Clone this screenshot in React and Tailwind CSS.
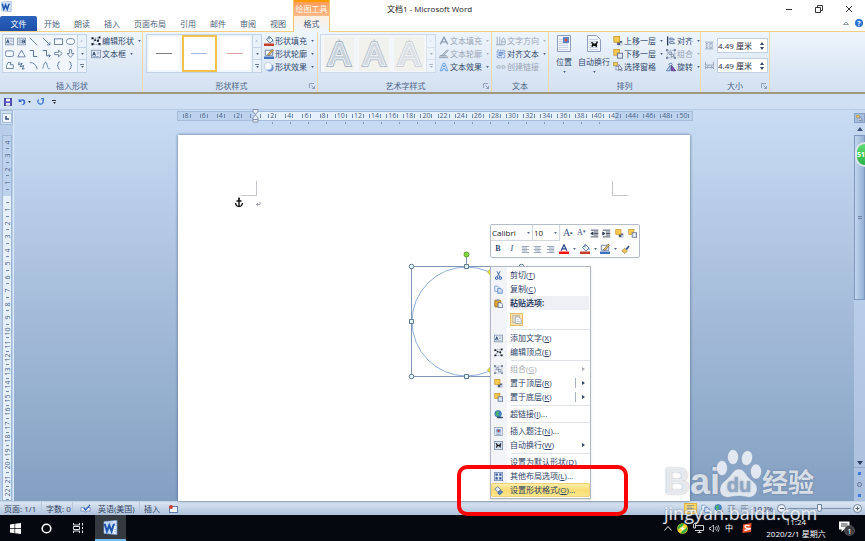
import React from 'react';
import clsx from 'clsx';

// every small icon is drawn on a 12 x 12 grid
const ICONS = {
  textbox: (
    <>
      <rect x="0.5" y="1.5" width="11" height="9" fill="#e8effa" stroke="#7d8fab" />
      <path d="M2 8 3.7 3.5 5.4 8M2.6 6.5h2.2" fill="none" stroke="#25406e" strokeWidth="1.1" />
      <path d="M7 4h3M7 6h3M2 9h8" stroke="#8193b0" strokeWidth="0.8" />
    </>
  ),
  vtextbox: (
    <>
      <rect x="0.5" y="1.5" width="11" height="9" fill="#e8effa" stroke="#7d8fab" />
      <path d="M3 3v6M5 3v6" stroke="#8193b0" />
      <path d="M7 4h3v4H7zM7 6h3" fill="none" stroke="#25406e" />
    </>
  ),
  line: <path d="M1 1 11 11" stroke="#4a6690" fill="none" />,
  arrow: <path d="M1 1 10 10M10.5 6.5v4h-4" stroke="#4a6690" fill="none" />,
  rect: <rect x="0.5" y="2.5" width="11" height="7.5" fill="#f7faff" stroke="#4a6690" />,
  oval: <ellipse cx="6" cy="6" rx="5.5" ry="4" fill="#f7faff" stroke="#4a6690" />,
  round: <rect x="0.5" y="2.5" width="11" height="7.5" rx="2.5" fill="#f7faff" stroke="#4a6690" />,
  triangle: <path d="M6 1.5 11 10.5H1z" fill="#f7faff" stroke="#4a6690" />,
  elbow: <path d="M1 2h5v8h5" fill="none" stroke="#4a6690" strokeWidth="1.2" />,
  elbowArrow: <path d="M1 2h5v7h5M9 7l2 2-2 2" fill="none" stroke="#4a6690" strokeWidth="1.2" />,
  rightArrow: <path d="M1 4.5h5V1.5L11 6l-5 4.5v-3H1z" fill="#f7faff" stroke="#4a6690" />,
  downArrow: <path d="M4.500 1v5H1.500L6 11l4.500-5h-3V1z" fill="#f7faff" stroke="#4a6690" />,
  freeform: <path d="M2 6 4 2h4L7 5h4v5H2z" fill="#f7faff" stroke="#4a6690" strokeLinejoin="round" />,
  scribble: <path d="M3 1 2 5l5-2-3 5 5-2-2 5 3-1" fill="none" stroke="#4a6690" strokeWidth="1.2" />,
  arc: <path d="M1 2q8 0 10 9" fill="none" stroke="#4a6690" />,
  curve: <path d="M1 10C4-2 6 1 7 6s2 5 4 4" fill="none" stroke="#4a6690" />,
  lbrace: <path d="M8 1Q5.500 1 5.500 3v1.500Q5.500 6 4 6q1.500 0 1.500 1.500V9q0 2 2.500 2" fill="none" stroke="#4a6690" />,
  rbrace: <path d="M4 1q2.500 0 2.500 2v1.500Q6.500 6 8 6 6.500 6 6.500 7.500V9q0 2-2.500 2" fill="none" stroke="#4a6690" />,
  editPoints: (
    <>
      <path d="M2 3 10 2 8 6l2 4H2l2-4z" fill="none" stroke="#6d7c94" strokeDasharray="1.500 1" />
      <path d="M0.500 1.500h2.500v2.500H0.500zM9 0.500h2.500V3H9zM7 4.500h2.500V7H7zM0.500 8.500h2.500V11H0.500zM9 8.500h2.500V11H9zM4 4h2v2H4z" fill="#1c222c" />
    </>
  ),
  fill: (
    <>
      <path d="M3 4 7 1l4 4-4 3.500z" fill="#eef3fb" stroke="#4c6797" />
      <path d="M10 4q2 2 1 4-1.500-1-1-4" fill="#3c70c4" />
      <path d="M6 0v4" stroke="#4c6797" />
      <rect x="0" y="9" width="12" height="3" fill="#c43c2c" />
    </>
  ),
  outline: (
    <>
      <path d="M1.500 1.500h9v6h-9z" fill="#f5f8fd" stroke="#5b7099" />
      <path d="M4 7 10 0l1.500 1.500L6 8z" fill="#e8b64c" stroke="#3a4a68" strokeWidth="0.600" />
      <rect x="0" y="9" width="12" height="3" fill="#3f72bd" />
    </>
  ),
  effect: (
    <>
      <circle cx="7" cy="7" r="4.500" fill="#6f94d6" />
      <circle cx="5" cy="5" r="4.500" fill="#f6f9ff" stroke="#9eb4d8" strokeWidth="0.600" />
    </>
  ),
  textFill: <path d="M1.500 10 6 1.500 10.500 10M3 7h6" fill="none" stroke="#8c9bb1" strokeWidth="1.600" />,
  textOutline: (
    <>
      <path d="M1 8h8M3 8 10 1l1 1-6 6" fill="none" stroke="#8f9bac" strokeWidth="1.200" />
      <rect x="0" y="9" width="11" height="2" fill="#a1abba" />
    </>
  ),
  textEffect: (
    <path d="M1.500 10.500 5 1.500h2l3.500 9H8L7.300 8H4.700L4 10.500zM5.300 6h1.400L6 4z" fill="#e8f4ff" stroke="#4f92d6" />
  ),
  direction: <path d="M1.500 1v10M4.500 1v10M0 10.500h11M7 10V5l2-3 2 3v5M7 7h4" fill="none" stroke="#96a3b5" />,
  alignText: (
    <>
      <rect x="1.500" y="1.500" width="9" height="9" fill="#dce9fb" stroke="#5a83bf" strokeDasharray="2 1" />
      <path d="M3 4h6M3 6h6M3 8h4" stroke="#3566ad" />
    </>
  ),
  link: <path d="M5 4.500H2.500a1.500 1.500 0 0 0 0 3H5M7 4.500h2.500a1.500 1.500 0 0 1 0 3H7M4 6h4" fill="none" stroke="#a0a9b6" />,
  front: (
    <>
      <rect x="5" y="6" width="6" height="5" fill="#4b5b7d" />
      <rect x="1" y="0.500" width="7" height="7" fill="#f6c84e" stroke="#c08a26" strokeWidth="0.800" />
      <rect x="8.500" y="8" width="3" height="3" fill="#cfd8ea" />
    </>
  ),
  back: (
    <>
      <rect x="1" y="0.500" width="7" height="7" fill="#f6c84e" stroke="#c08a26" strokeWidth="0.800" />
      <rect x="5.500" y="5" width="6" height="6" fill="#dfe6f2" stroke="#56678a" />
    </>
  ),
  pane: (
    <>
      <rect x="0.500" y="0.500" width="5" height="4" fill="#f4ca5c" stroke="#a98a4a" strokeWidth="0.800" />
      <rect x="3.500" y="5.500" width="5" height="4" fill="#e0e8f5" stroke="#6d80a2" strokeWidth="0.800" />
      <path d="M7 3v7l1.500-1.500L10 11l1-1-1.500-2H11z" fill="#fff" stroke="#2e4269" strokeWidth="0.700" />
    </>
  ),
  align: (
    <>
      <path d="M2 0.500v11" stroke="#1d3054" strokeWidth="1.500" />
      <path d="M4.500 2.500H8l2 2H4.500zM4.500 6.500h4l2 2.500h-6z" fill="#e2eaf7" stroke="#526ea0" />
    </>
  ),
  group: (
    <>
      <rect x="1.500" y="1.500" width="9" height="9" fill="none" stroke="#8c9ab0" strokeDasharray="2 1" />
      <path d="M3.500 3.500h3v3h-3zM6 6h3v3H6z" fill="#e3e9f2" stroke="#7c8aa2" />
      <path d="M0 0h2.500v2.500H0zM9.500 0H12v2.500H9.500zM0 9.500h2.500V12H0zM9.500 9.500H12V12H9.500z" fill="#7c8aa2" />
    </>
  ),
  rotate: (
    <>
      <path d="M0.500 10.500 5 4v6.500z" fill="#c5d8f3" stroke="#4d76b5" />
      <path d="M6.500 10.500V4l5 6.500z" fill="#7f4fb4" stroke="#523089" />
      <path d="M3 3q3-3 5 0" fill="none" stroke="#3d5c92" />
    </>
  ),
  height: <path d="M0 1.500h11M0 10.500h11M2.500 3v6M1 4.500 2.500 3 4 4.500M1 7.500 2.500 9 4 7.500M6.500 3v6h3V3z" fill="none" stroke="#6c7f9f" strokeWidth="0.800" />,
  width: <path d="M0.500 1v4.500h11V1M2 8.500h8M3.500 7 2 8.500 3.500 10M8.500 7 10 8.500 8.500 10M0.500 7v4M11.500 7v4" fill="none" stroke="#6c7f9f" strokeWidth="0.900" />,
  cut: (
    <>
      <path d="M4 0.500 8 8M8 0.500 4 8" stroke="#44679f" strokeWidth="1.300" />
      <circle cx="3.500" cy="9.500" r="1.700" fill="none" stroke="#1f4fa8" strokeWidth="1.300" />
      <circle cx="8.500" cy="9.500" r="1.700" fill="none" stroke="#1f4fa8" strokeWidth="1.300" />
    </>
  ),
  copy: (
    <>
      <path d="M1 1.500h4l2 2v5H1z" fill="#eaf2ff" stroke="#6e92cf" />
      <path d="M5 4.500h4l2 2v4.500H5z" fill="#cfe0fb" stroke="#4a76bf" />
    </>
  ),
  paste: (
    <>
      <rect x="1" y="1.500" width="8" height="9" rx="1" fill="#dca335" stroke="#94651c" />
      <rect x="3.500" y="0.500" width="3" height="2" fill="#8a93a5" />
      <path d="M5.500 5h4l2 2v4.500h-6z" fill="#eef3fb" stroke="#45608f" />
    </>
  ),
  pastePage: (
    <>
      <rect x="1" y="1.500" width="8" height="9" fill="#e9e1cf" stroke="#b3a788" strokeWidth="0.800" />
      <path d="M4 3.500h4l3 3v5H4z" fill="#fff" stroke="#8796ad" strokeWidth="0.900" />
      <path d="M5.500 7h3.500M5.500 9h4" stroke="#a9b4c6" strokeWidth="0.800" />
    </>
  ),
  hyperlink: (
    <>
      <circle cx="5.500" cy="5" r="4.500" fill="#3f86d2" stroke="#2a5c9b" strokeWidth="0.600" />
      <path d="M3 2q3-1 4 1L5 5l2 2-2 2Q1 6 3 2" fill="#4fb464" />
      <path d="M5 10h2.500M8.500 10H11" stroke="#38455c" strokeWidth="2" strokeLinecap="round" />
    </>
  ),
  caption: (
    <>
      <rect x="1" y="0.500" width="10" height="11" fill="#eef3fa" stroke="#8394b1" />
      <rect x="3" y="2.500" width="6" height="5" fill="#7c9bd0" />
      <circle cx="6" cy="5" r="1.500" fill="#b9463a" />
      <path d="M3 9.500h6" stroke="#52678f" />
    </>
  ),
  wrap: (
    <>
      <rect x="0.500" y="0.500" width="11" height="11" fill="#d8e3f4" stroke="#7588a9" />
      <path d="M2 3h2l1 2h2l2-2.500 1 1.500-1 1v4H8L7 7H5L4 9H2.500l1-3z" fill="#16191f" />
    </>
  ),
  layout: (
    <>
      <rect x="0.500" y="0.500" width="11" height="11" fill="#dce7f8" stroke="#6a82ad" />
      <path d="M2 2h3v3H2zM7 2h3v3H7zM2 7h3v3H2zM7 7h3v3H7z" fill="#31549c" />
    </>
  ),
  format: (
    <>
      <path d="M1 4 5 1l4 4-4 3z" fill="#e6eefb" stroke="#4b6699" />
      <path d="M5 9.500 9 6l2.500 2-4 3.500z" fill="#5f8bd1" stroke="#2e4f8c" />
    </>
  ),
  indentLess: <path d="M1 1.500h10M5 4h6M5 6h6M5 8h6M1 10.500h10M4 4 1 6l3 2z" fill="#233860" stroke="#3a4457" strokeWidth="1.200" />,
  indentMore: <path d="M1 1.500h10M5 4h6M5 6h6M5 8h6M1 10.500h10M1 4l3 2-3 2z" fill="#233860" stroke="#3a4457" strokeWidth="1.200" />,
  left: <path d="M1 2h10M1 4h7M1 6h10M1 8h7M1 10h10" stroke="#7f8da5" />,
  center: <path d="M1 2h10M2.500 4h7M1 6h10M2.500 8h7M1 10h10" stroke="#7f8da5" />,
  right: <path d="M1 2h10M4 4h7M1 6h10M4 8h7M1 10h10" stroke="#7f8da5" />,
  fontColor: (
    <>
      <path d="M2.500 8 6 1l3.500 7M4 5.700h4" fill="none" stroke="#274a8a" strokeWidth="1.500" />
      <rect x="0" y="9" width="12" height="3" fill="#f01414" />
    </>
  ),
  brush: (
    <>
      <path d="M6 5 10 0.500 11.500 2 8 7z" fill="#38589a" />
      <path d="M1 7.500 5 4.500 8.500 8 5 11.500z" fill="#ecc75a" stroke="#8f7433" strokeWidth="0.800" />
    </>
  ),
  save: (
    <>
      <rect x="0.500" y="0.500" width="11" height="11" fill="#5a55c0" stroke="#36338c" />
      <rect x="3" y="1" width="6" height="4" fill="#f4f6fd" />
      <rect x="3" y="7.500" width="6" height="4" fill="#dfe4f6" />
    </>
  ),
  undo: <path d="M1 1v5h5L4 4.200q4-1.700 4.500 2Q8.500 9 5 10.500q6 0 6-5Q10 0 3 2.800z" fill="#3467c8" />,
  redo: <path d="M3 2.500A4.500 4.500 0 1 0 9.500 3M7 1h4v4" fill="none" stroke="#3d78d0" strokeWidth="2.200" />,
};

function Icon({ name, className = 'size-[10px]' }) {
  return (
    <svg viewBox="0 0 12 12" className={clsx('shrink-0', className)} aria-hidden="true">
      {ICONS[name]}
    </svg>
  );
}

function Caret({ className = 'text-[#4a5f80]' }) {
  return (
    <svg viewBox="0 0 4 3" className={clsx('h-[2px] w-[3px] shrink-0', className)} aria-hidden="true">
      <path d="M0 0h4L2 3z" fill="currentColor" />
    </svg>
  );
}

function WordLogo({ className }) {
  return (
    <svg viewBox="0 0 14 14" className={className} aria-hidden="true">
      <path d="M1 1.500 13 0.500v13L1 12.500z" fill="#eef4fd" stroke="#7ca0d8" strokeWidth="0.800" />
      <path d="M1 2 9.500 1.500v11L1 12z" fill="#c4d8f5" />
      <path d="M10.500 3h2M10.500 5h2M10.500 9h2M10.500 11h2" stroke="#86a8dd" strokeWidth="0.800" />
      <path d="M1.500 3.500 3.700 10.500 5.800 5 8 10.500 10.300 3.500" fill="none" stroke="#1e56ae" strokeWidth="1.900" />
    </svg>
  );
}

const TABS = ['开始', '朗读', '插入', '页面布局', '引用', '邮件', '审阅', '视图'];

function Header() {
  return (
    <header className="flex h-[31px] shrink-0 bg-white">
      <div className="flex flex-col">
        <div className="h-4 pl-px pt-px">
          <WordLogo className="size-[11px]" />
        </div>
        <nav className="flex h-[15px]">
          <button type="button" className="w-[37px] rounded-t-xs bg-linear-to-b from-[#2b63bd] to-[#1e4fa8] text-white">文件</button>
          {TABS.map((tab) => (
            <button key={tab} type="button" className="px-[7px] text-[#4d5f7b]">{tab}</button>
          ))}
        </nav>
      </div>
      <div className="relative z-10 -mb-px flex w-[37px] flex-col border-x border-[#f3c56d]">
        <span className="flex h-4 items-center justify-center border-t-2 border-[#ff9900] bg-linear-to-b from-[#fd9d58] to-[#fdb988] text-[#fff6ee]">
          绘图工具
        </span>
        <button type="button" className="flex-1 bg-linear-to-b from-[#fdeee0] to-[#eef5fc] text-[#3d5172]">格式</button>
      </div>
      <div className="flex flex-1 flex-col">
        <div className="flex h-[17px] items-center pl-[57px]">
          <h1 className="text-[#222]">文档1 - Microsoft Word</h1>
          <div className="ml-auto flex items-center gap-[22px] pr-3 text-[#333]">
            <button type="button" aria-label="最小化">
              <svg viewBox="0 0 8 8" className="size-2"><path d="M1 4.500h6" stroke="currentColor" /></svg>
            </button>
            <button type="button" aria-label="还原">
              <svg viewBox="0 0 8 8" className="size-2"><path d="M0.500 2.500h5v5h-5zM2.500 2V0.500h5v5H6" fill="none" stroke="currentColor" /></svg>
            </button>
            <button type="button" aria-label="关闭">
              <svg viewBox="0 0 8 8" className="size-2"><path d="m1 1 6 6M7 1 1 7" stroke="currentColor" /></svg>
            </button>
          </div>
        </div>
        <div className="ml-auto flex items-center gap-[6px] pr-[2px] pt-[2px]">
          <button type="button" aria-label="收起功能区">
            <svg viewBox="0 0 6 4" className="h-1 w-[6px]"><path d="M0.500 3.500h5L3 1z" fill="none" stroke="#6f7d92" strokeWidth="0.800" /></svg>
          </button>
          <button type="button" className="flex size-[8px] items-center justify-center rounded-full bg-[#2e74d2] text-[7px] font-bold leading-none text-white">?</button>
        </div>
      </div>
    </header>
  );
}

function Tool({ icon, label, caret, disabled }) {
  return (
    <button
      type="button"
      disabled={disabled}
      className={clsx('flex h-[13px] items-center gap-px whitespace-nowrap', disabled ? 'text-[#9aa4b3]' : 'text-[#33496c]')}
    >
      <Icon name={icon} />
      <span>{label}</span>
      {caret && <span className="flex pl-[3px]"><Caret className={disabled ? 'text-[#a9b2bf]' : undefined} /></span>}
    </button>
  );
}

function Group({ title, launcher, className, children }) {
  return (
    <section className={clsx('flex shrink-0 flex-col justify-between border-r border-[#f1d9ab] pt-[2px]', className)}>
      <div className="flex h-[39px]">{children}</div>
      <div className="flex h-[13px] items-center text-[#4d6285]">
        <span className="flex-1 text-center">{title}</span>
        {launcher && (
          <button type="button" aria-label={title} className="-ml-2 pr-[2px]">
            <svg viewBox="0 0 6 6" className="size-[6px]"><path d="M0.500 5V0.500H5M2.500 2.500l3 3M5.500 3v2.500H3" fill="none" stroke="#8091ad" strokeWidth="0.800" /></svg>
          </button>
        )}
      </div>
    </section>
  );
}

function GalleryScroll({ faded }) {
  return (
    <div className={clsx('flex w-[9px] flex-col border-l border-[#c3d3e7] bg-[#e9f1fb]', faded && 'opacity-50')}>
      <button type="button" aria-label="上一行" className="flex flex-1 rotate-180 items-center justify-center"><Caret className="text-[#b5c1d2]" /></button>
      <button type="button" aria-label="下一行" className="flex flex-1 items-center justify-center border-y border-[#c3d3e7]"><Caret /></button>
      <button type="button" aria-label="更多" className="flex flex-1 flex-col items-center justify-center gap-px">
        <span className="h-px w-1 bg-[#6d809e]" />
        <Caret />
      </button>
    </div>
  );
}

const SHAPES = [
  'textbox', 'vtextbox', 'line', 'arrow', 'rect', 'oval',
  'round', 'triangle', 'elbow', 'elbowArrow', 'rightArrow', 'downArrow',
  'freeform', 'scribble', 'arc', 'curve', 'lbrace', 'rbrace',
];

const SHAPE_STYLES = [
  { name: '黑色', line: 'bg-[#7b7f80]' },
  { name: '蓝色', line: 'bg-[#a3bbdd]', active: true },
  { name: '红色', line: 'bg-[#dea5a3]' },
];

const ART_STYLES = ['#a5b3c5', '#b4bfcd', '#cdd2d8'];

function BigTool({ label, dog }) {
  return (
    <button type="button" className="flex w-[30px] flex-col items-center whitespace-nowrap pt-px text-[#33496c]">
      <svg viewBox="0 0 14 17" className="h-[17px] w-[14px]" aria-hidden="true">
        <path d={dog ? 'M0.500 0.500h9l4 4v12h-13z' : 'M0.500 0.500h13v16h-13z'} fill="#f2f6fc" stroke="#8d9fbd" />
        <path d="M2 4.500h9M2 6.500h9M2 8.500h9M2 10.500h9M2 12.500h9M2 14.500h9" stroke="#b8c6dc" strokeWidth="0.700" />
        {dog ? (
          <path d="M4 7h1.500l1 1.500h2L10 6l1 1.500-1 1v3.500H9L8 11H6.500L5.500 12H4.500l.5-3z" fill="#15181c" />
        ) : (
          <>
            <rect x="6" y="2" width="6" height="6" fill="#5f84c8" />
            <circle cx="9" cy="5" r="1.500" fill="#c9564b" />
          </>
        )}
      </svg>
      <span className="pt-1">{label}</span>
      <span className="flex pt-[3px]"><Caret /></span>
    </button>
  );
}

function SizeField({ id, icon, label }) {
  return (
    <div className="flex items-center gap-[3px]">
      <label htmlFor={id} aria-label={label}><Icon name={icon} className="size-[9px]" /></label>
      <div className="flex h-[15px] w-[51px] items-center border border-[#c0cfe2] bg-white pr-[3px]">
        <input id={id} defaultValue="4.49 厘米" className="min-w-0 flex-1 bg-transparent text-[#1f2a3d] outline-none" />
        <svg viewBox="0 0 4 8" className="h-2 w-1" aria-hidden="true"><path d="M0 3h4L2 0zM0 5h4L2 8z" fill="#33496c" /></svg>
      </div>
    </div>
  );
}

function Ribbon() {
  return (
    <div className="flex h-[63px] shrink-0 overflow-hidden border-b-2 border-t border-b-[#a3967f] border-t-[#f5cf83] bg-linear-to-b from-[#eef5fc] to-[#d2e0f1]">
      <Group title="插入形状" className="w-[143px] pl-[2px]">
        <div className="flex w-[85px] border border-[#c3d3e7] bg-[#f1f6fd]">
          <div className="grid flex-1 grid-cols-6 place-items-center">
            {SHAPES.map((shape) => (
              <button key={shape} type="button" aria-label={shape}><Icon name={shape} className="size-[9px]" /></button>
            ))}
          </div>
          <GalleryScroll />
        </div>
        <div className="flex flex-col pl-1">
          <Tool icon="editPoints" label="编辑形状" caret />
          <Tool icon="textbox" label="文本框" caret />
        </div>
      </Group>

      <Group title="形状样式" launcher className="w-[175px] pl-[3px]">
        <div className="flex w-[116px] border border-[#c3d3e7] bg-[#f1f6fd]">
          <div className="flex flex-1 items-stretch gap-px">
            {SHAPE_STYLES.map(({ name, line, active }) => (
              <button
                key={name}
                type="button"
                aria-label={name}
                className={clsx('flex flex-1 items-center justify-center border-2 bg-white', active ? 'border-[#f2c24b]' : 'border-[#f1f6fd]')}
              >
                <span className={clsx('h-px w-4', line)} />
              </button>
            ))}
          </div>
          <GalleryScroll />
        </div>
        <div className="flex flex-col pl-[2px]">
          <Tool icon="fill" label="形状填充" caret />
          <Tool icon="outline" label="形状轮廓" caret />
          <Tool icon="effect" label="形状效果" caret />
        </div>
      </Group>

      <Group title="艺术字样式" launcher className="w-[174px] pl-[2px]">
        <div className="flex w-[116px] border border-[#ccd9ea] bg-[#f3f7fc]">
          <div className="flex flex-1 items-center justify-around">
            {ART_STYLES.map((color) => (
              <button key={color} type="button" disabled aria-label="艺术字" className="bg-[#f1f2ee]">
                <svg viewBox="0 0 30 34" className="h-[34px] w-[30px] font-['Liberation_Sans'] text-[31px]">
                  <text x="15" y="28" textAnchor="middle" fill="#f6f7f5" stroke={color} strokeWidth="4">A</text>
                  <text x="15" y="28" textAnchor="middle" fill="#f1f2ee" stroke="#eef1f4" strokeWidth="2">A</text>
                  <text x="15" y="28" textAnchor="middle" fill={color} fillOpacity="0.500">A</text>
                </svg>
              </button>
            ))}
          </div>
          <GalleryScroll faded />
        </div>
        <div className="flex flex-col pl-[3px]">
          <Tool icon="textFill" label="文本填充" caret disabled />
          <Tool icon="textOutline" label="文本轮廓" caret disabled />
          <Tool icon="textEffect" label="文本效果" caret />
        </div>
      </Group>

      <Group title="文本" className="w-[57px]">
        <div className="flex flex-col pl-1">
          <Tool icon="direction" label="文字方向" caret disabled />
          <Tool icon="alignText" label="对齐文本" caret />
          <Tool icon="link" label="创建链接" disabled />
        </div>
      </Group>

      <Group title="排列" className="w-[152px]">
        <BigTool label="位置" />
        <BigTool label="自动换行" dog />
        <div className="flex flex-col pl-1">
          <Tool icon="front" label="上移一层" caret />
          <Tool icon="back" label="下移一层" caret />
          <Tool icon="pane" label="选择窗格" />
        </div>
        <div className="flex flex-col pl-[3px]">
          <Tool icon="align" label="对齐" caret />
          <Tool icon="group" label="组合" caret disabled />
          <Tool icon="rotate" label="旋转" caret />
        </div>
      </Group>

      <Group title="大小" launcher className="w-[69px]">
        <div className="flex flex-col justify-between pl-1 pt-1">
          <SizeField id="shape-height" icon="height" label="高度" />
          <SizeField id="shape-width" icon="width" label="宽度" />
        </div>
      </Group>
    </div>
  );
}

function QuickAccess() {
  return (
    <div className="flex h-[15px] shrink-0 items-center bg-[#cfe0f5] pl-1">
      <button type="button" aria-label="保存"><Icon name="save" className="size-2" /></button>
      <button type="button" aria-label="撤消" className="ml-[6px]"><Icon name="undo" className="size-2" /></button>
      <span className="ml-[2px]"><Caret className="text-[#222]" /></span>
      <button type="button" aria-label="重复" className="ml-[6px]"><Icon name="redo" className="size-[7px]" /></button>
      <button type="button" aria-label="自定义快速访问工具栏" className="ml-[8px] flex flex-col items-center gap-px">
        <span className="h-px w-1 bg-[#333]" />
        <Caret className="text-[#222]" />
      </button>
    </div>
  );
}

const H_MARKS = Array.from({ length: 30 }, (_, i) => i * 2 - 8);
const V_MARKS = Array.from({ length: 27 }, (_, i) => i - 4);

// the margins of the page are darker; 0 and 42 lie on the border between both
function markColor(n) {
  if (n === 0) return 'bg-linear-to-r from-[#bdd2ec] from-50% to-[#e6f0fb] to-50%';
  if (n === 42) return 'bg-linear-to-r from-[#e6f0fb] from-50% to-[#bdd2ec] to-50%';
  return n < 0 || n > 42 ? 'bg-[#bdd2ec]' : 'bg-[#e6f0fb]';
}

function HorizontalRuler() {
  return (
    <div className="w-[514px] shrink-0 text-[#4a6489]">
      <div className="grid h-[8px] grid-cols-[repeat(30,minmax(0,1fr))] grid-rows-[8px] outline outline-[#a5bcd9]">
        {H_MARKS.map((n) => (
          <span key={n} className={clsx('flex items-center justify-center gap-px text-[7px] leading-[8px]', markColor(n))}>
            <i className="h-1 w-px bg-[#6f8bb0]" />
            {n === 0 ? (
              <svg viewBox="0 0 7 14" className="z-10 -my-1 h-[14px] w-[7px] shrink-0" aria-label="缩进">
                <path d="M1 0.500h5v2L3.500 5.500 1 2.500zM3.500 6 6 8.500v4.500H1V8.500zM1 10.500h5" fill="#e8eef7" stroke="#7b8ca8" strokeWidth="0.900" />
              </svg>
            ) : (
              <span>{Math.abs(n)}</span>
            )}
            <i className="h-1 w-px bg-[#6f8bb0]" />
          </span>
        ))}
      </div>
      <div className="flex justify-between pl-[94px] pr-[92px] pt-[2px]">
        {Array.from({ length: 19 }, (_, i) => <i key={i} className="h-[2px] w-px bg-[#7d94b5]" />)}
      </div>
    </div>
  );
}

function VerticalRuler() {
  return (
    <div className="flex w-[14px] shrink-0 flex-col border-r border-[#dbe9f9] bg-[#b9cee8] pl-[2px] pr-px">
      <div className="-ml-[2px] -mr-px flex h-[15px] items-center justify-center border border-[#a5bcd9] bg-[#cfe0f5]">
        <button type="button" aria-label="制表符" className="flex size-[10px] items-center justify-center border border-[#a5bcd9] bg-[#eef5fd]">
          <svg viewBox="0 0 4 4" className="size-1"><path d="M1 0v3h3" fill="none" stroke="#2f4a78" strokeWidth="1.500" /></svg>
        </button>
      </div>
      <div className="mt-[10px] flex min-h-0 flex-1 flex-col overflow-hidden border border-[#9fb6d4] text-[7px] leading-none text-[#4a6489]">
        {V_MARKS.map((n) => (
          <span
            key={n}
            className={clsx(
              'flex min-h-0 flex-1 flex-col items-center justify-between',
              n < 0 && 'bg-[#bdd2ec]',
              n === 0 && 'bg-linear-to-b from-[#bdd2ec] from-50% to-[#e6f0fb] to-50%',
              n > 0 && 'bg-[#e6f0fb]',
            )}
          >
            <span className="flex min-h-0 flex-1 items-center">
              {n !== 0 && <span className="-rotate-90">{Math.abs(n)}</span>}
            </span>
            <i className="h-px w-[3px] shrink-0 bg-[#6f8bb0]" />
          </span>
        ))}
      </div>
    </div>
  );
}

function MiniToolbar() {
  return (
    <div className="absolute left-[312px] top-[89px] flex w-[150px] flex-col rounded-xs border border-[#b6bdc9] bg-white shadow-xs">
      <div className="flex h-4 items-center gap-[3px]">
        <div className="flex h-full">
          <div className="flex w-[42px] items-center border-b border-r border-[#d3d8e0] pr-[2px]">
            <select aria-label="字体" className="min-w-0 flex-1 appearance-none pl-px text-[#222] outline-none"><option>Calibri</option></select>
            <Caret />
          </div>
          <div className="flex w-[27px] items-center border-b border-r border-[#d3d8e0] pr-[2px]">
            <select aria-label="字号" className="min-w-0 flex-1 appearance-none pl-px text-[#222] outline-none"><option>10</option></select>
            <Caret />
          </div>
        </div>
        <div className="flex flex-1 items-center justify-between pr-[2px]">
          <button type="button" className="font-['Liberation_Serif'] text-[10px] leading-none text-[#3a5684]">A<sup className="text-[5px]">▴</sup></button>
          <button type="button" className="font-['Liberation_Serif'] leading-none text-[#3a5684]">A<sup className="text-[5px]">▾</sup></button>
          {['indentLess', 'indentMore', 'front', 'back'].map((name) => (
            <button key={name} type="button" aria-label={name}><Icon name={name} className="size-[9px]" /></button>
          ))}
        </div>
      </div>
      <div className="flex h-4 items-center justify-between pl-[2px] pr-[9px]">
        <button type="button" className="w-[10px] font-['Liberation_Serif'] font-bold text-[#2f4a7c]">B</button>
        <button type="button" className="w-[10px] font-['Liberation_Serif'] italic text-[#2f4a7c]">I</button>
        {['left', 'center', 'right'].map((name) => (
          <button key={name} type="button" aria-label={name}><Icon name={name} className="size-[9px]" /></button>
        ))}
        {['fontColor', 'fill', 'outline'].map((name) => (
          <button key={name} type="button" aria-label={name} className="flex items-center gap-1"><Icon name={name} /><Caret /></button>
        ))}
        <button type="button" aria-label="格式刷"><Icon name="brush" className="size-[9px]" /></button>
      </div>
    </div>
  );
}

const MENU = [
  { icon: 'cut', label: '剪切', hotkey: 'T' },
  { icon: 'copy', label: '复制', hotkey: 'C' },
  { icon: 'paste', label: '粘贴选项:', header: true },
  { pasteOptions: true },
  { separator: true },
  { icon: 'textbox', label: '添加文字', hotkey: 'X' },
  { icon: 'editPoints', label: '编辑顶点', hotkey: 'E' },
  { separator: true },
  { icon: 'group', label: '组合', hotkey: 'G', disabled: true, sub: true },
  { icon: 'front', label: '置于顶层', hotkey: 'R', sub: true, split: true },
  { icon: 'back', label: '置于底层', hotkey: 'K', sub: true, split: true },
  { separator: true },
  { icon: 'hyperlink', label: '超链接', hotkey: 'I', dots: true },
  { separator: true },
  { icon: 'caption', label: '插入题注', hotkey: 'N', dots: true },
  { icon: 'wrap', label: '自动换行', hotkey: 'W', sub: true },
  { separator: true },
  { label: '设置为默认形状', hotkey: 'D' },
  { icon: 'layout', label: '其他布局选项', hotkey: 'L', dots: true },
  { icon: 'format', label: '设置形状格式', hotkey: 'O', dots: true, active: true },
];

function MenuRow({ item }) {
  if (item.separator) {
    return <div className="ml-5 flex h-[3px] items-center"><span className="h-px flex-1 bg-[#dfe2e8]" /></div>;
  }
  if (item.pasteOptions) {
    return (
      <div className="flex h-[18px] items-center pl-[19px]">
        <button type="button" aria-label="保留源格式" className="flex size-[13px] items-center justify-center border border-[#e8bd6a] bg-[#fbe3ad]">
          <Icon name="pastePage" />
        </button>
      </div>
    );
  }
  return (
    <button
      type="button"
      disabled={item.disabled}
      className={clsx(
        'flex h-[14px] items-center whitespace-nowrap pl-[3px] pr-[5px] text-left',
        item.disabled ? 'text-[#a6abb3]' : 'text-[#2d4266]',
        item.active && 'rounded-xs bg-linear-to-b from-[#fdf0b0] via-[#f9dc72] to-[#fbe890] outline outline-[#edd27a] -outline-offset-1',
      )}
    >
      <span className="w-4">{item.icon && <Icon name={item.icon} className="size-[9px]" />}</span>
      <span className={clsx('flex h-full flex-1 items-center', item.header && '-mr-1 bg-[#eef0f5] font-bold')}>
        {item.label}
        {item.hotkey && <>(<u>{item.hotkey}</u>)</>}
        {item.dots && '...'}
      </span>
      {item.split && <span className="mr-[6px] h-[10px] w-px bg-[#aab2c0]" />}
      {item.sub && (
        <svg viewBox="0 0 3 4" className="h-1 w-[3px]" aria-hidden="true"><path d="M0 0v4l3-2z" fill="currentColor" /></svg>
      )}
    </button>
  );
}

function ContextMenu() {
  return (
    <div className="absolute left-[312px] top-[131px] flex w-[101px] flex-col border border-[#b1b8c4] bg-white bg-linear-to-r from-[#f2f4f8] from-[16px] to-white to-[16px] py-px shadow-sm">
      {MENU.map((item, i) => <MenuRow key={i} item={item} />)}
    </div>
  );
}

function Page() {
  return (
    <article className="relative min-h-0 w-[512px] flex-1 bg-white shadow-[0_0_3px_#4f6a90]">
      <svg viewBox="0 0 512 260" className="absolute left-0 top-0 h-[260px] w-[512px]" aria-hidden="true">
        <path d="M63 60.500h15.500V46M450 60.500h-15.500V46" fill="none" stroke="#c3c6cb" />
        <path d="M61 64v7M58.500 66h5M57.500 68q.5 3.500 3.500 3.500t3.500-3.500" fill="none" stroke="#111" strokeWidth="1.400" />
        <circle cx="61" cy="63.500" r="1" fill="#111" />
        <path d="M82 67v2.500h-3.500M80 68l-1.500 1.500L80 71" fill="none" stroke="#8a8f97" strokeWidth="0.800" />
        <rect x="233.500" y="131.500" width="110" height="110" fill="none" stroke="#8197b3" />
        <circle cx="288.500" cy="186.500" r="54.500" fill="none" stroke="#8fb0de" />
        <path d="M288.500 131V121" stroke="#8197b3" />
        <circle cx="288.500" cy="119.500" r="2.500" fill="#86dc3c" stroke="#5b9b3a" />
        <g fill="#e4f7fb" stroke="#5f7a94">
          <circle cx="233.500" cy="131.500" r="2.300" />
          <circle cx="343.500" cy="131.500" r="2.300" />
          <circle cx="233.500" cy="241.500" r="2.300" />
          <path d="M286.500 129.500h4v4h-4zM286.500 239.500h4v4h-4zM231.500 184.500h4v4h-4z" />
        </g>
        <path d="m312 134.500 2.500 2.500-2.500 2.500-2.500-2.500zM312 232.500l2.500 2.500-2.500 2.500-2.500-2.500z" fill="#f7ec3c" stroke="#b09e36" strokeWidth="0.800" />
      </svg>
      <MiniToolbar />
      <ContextMenu />
      <div className="absolute left-[279px] top-[330px] z-20 h-[51px] w-[171px] rounded-[10px] border-4 border-[#fb0207]" />
    </article>
  );
}

function Scrollbar() {
  return (
    <div className="relative flex w-[11px] shrink-0 flex-col items-center bg-linear-to-b from-[#c6d9f1] to-[#a9c0de] pt-[3px]">
      <button type="button" aria-label="标尺" className="flex h-[10px] w-full items-center justify-center border border-[#87a0c3] bg-[#a5bedd]">
        <Icon name="pane" className="size-[7px]" />
      </button>
      <button type="button" aria-label="向上" className="flex h-3 items-center">
        <svg viewBox="0 0 6 4" className="h-1 w-[6px]"><path d="M0 4h6L3 0z" fill="#3b5075" /></svg>
      </button>
      <div className="flex h-[165px] w-full flex-col items-center justify-center gap-px border border-[#7f99be] bg-linear-to-r from-[#c3d7ef] to-[#94b0d4]">
        <i className="h-px w-1 bg-[#6e83a5]" />
        <i className="h-px w-1 bg-[#6e83a5]" />
      </div>
      <button type="button" aria-label="向下" className="mt-auto flex h-2 items-center">
        <svg viewBox="0 0 6 4" className="h-1 w-[6px]"><path d="M0 0h6L3 4z" fill="#2c3f63" /></svg>
      </button>
      <div className="flex h-[34px] w-full flex-col items-center justify-around border-t border-[#93aacb]">
        <button type="button" aria-label="前一页" className="size-[3px] bg-[#3d78dd]" />
        <button type="button" aria-label="选择浏览对象" className="size-[5px] rounded-full border border-[#60728f]" />
        <button type="button" aria-label="下一页" className="size-[3px] bg-[#3d78dd]" />
      </div>
      <div className="absolute right-0 top-[32px] flex h-[25px] w-[10px] items-center overflow-hidden rounded-l-full border-2 border-r-0 border-[#dfe5ea] bg-linear-to-b from-[#5fdc72] to-[#27b24a] text-[7px] font-bold text-white">
        51
      </div>
    </div>
  );
}

function StatusBar() {
  const cell = 'flex h-full items-center border-r border-[#b6c7dc]';
  return (
    <footer className="flex h-[14px] shrink-0 items-center border-t border-[#c3d3e6] bg-linear-to-b from-[#dbe6f3] to-[#aec2da] text-[#33435e]">
      <span className={clsx(cell, 'w-[42px] pl-1')}>页面: 1/1</span>
      <span className={clsx(cell, 'w-[31px] pl-1')}>字数: 0</span>
      <span className="flex w-[25px] justify-center">
        <svg viewBox="0 0 12 10" className="h-[9px] w-[11px]" aria-hidden="true">
          <path d="M1 4q3-1 5 1 2-2 5-1v4q-3-1-5 1-2-2-5-1z" fill="#fff" stroke="#5c77a8" strokeWidth="0.800" />
          <path d="m4 4 2 3 5-6" fill="none" stroke="#2b62c2" strokeWidth="1.400" />
        </svg>
      </span>
      <span className={clsx(cell, 'w-[42px]')}>英语(美国)</span>
      <span className="w-[29px] pl-1">插入</span>
      <svg viewBox="0 0 9 8" className="h-2 w-[9px]" aria-hidden="true">
        <rect x="0.500" y="1.500" width="8" height="6" fill="#f1f5fb" stroke="#5f7cae" />
        <circle cx="2" cy="2" r="2" fill="#cf4034" />
      </svg>
      <div className="ml-auto flex items-center gap-[2px]">
        <div className="flex gap-1">
          <button type="button" aria-label="页面视图" className="border border-[#e2b23f] bg-[#fbd868] px-px"><Icon name="left" className="size-[9px]" /></button>
          <button type="button" aria-label="阅读版式"><Icon name="copy" className="size-[9px]" /></button>
          <button type="button" aria-label="Web 版式"><Icon name="hyperlink" className="size-[9px]" /></button>
          <button type="button" aria-label="大纲"><Icon name="center" className="size-[9px]" /></button>
          <button type="button" aria-label="草稿"><Icon name="left" className="size-[9px]" /></button>
        </div>
        <span className="w-[24px] text-center">100%</span>
        <button type="button" aria-label="缩小" className="flex size-[9px] items-center justify-center rounded-full border border-[#71829d] bg-[#eef3f9]"><i className="h-px w-1 bg-[#4e5f7c]" /></button>
        <input
          type="range"
          aria-label="显示比例"
          className="h-[10px] w-[63px] appearance-none bg-transparent [&::-webkit-slider-runnable-track]:h-px [&::-webkit-slider-runnable-track]:bg-[#8294b0] [&::-webkit-slider-thumb]:-mt-1 [&::-webkit-slider-thumb]:h-2 [&::-webkit-slider-thumb]:w-[5px] [&::-webkit-slider-thumb]:appearance-none [&::-webkit-slider-thumb]:rounded-b-full [&::-webkit-slider-thumb]:border [&::-webkit-slider-thumb]:border-[#6b7f9f] [&::-webkit-slider-thumb]:bg-[#edf2f8]"
        />
        <button type="button" aria-label="放大" className="mr-[3px]">
          <svg viewBox="0 0 9 9" className="size-[9px]"><circle cx="4.500" cy="4.500" r="4" fill="#eef3f9" stroke="#71829d" /><path d="M2.500 4.500h4M4.500 2.500v4" stroke="#4e5f7c" /></svg>
        </button>
      </div>
    </footer>
  );
}

function Taskbar() {
  return (
    <div className="flex h-[26px] shrink-0 items-center bg-[#05080f] text-white">
      <button type="button" aria-label="开始" className="flex w-[31px] justify-center">
        <svg viewBox="0 0 11 11" className="size-[11px]"><path d="m0 1.500 4.500-.7v4.400H0zM5.200.7 11 0v5.200H5.200zM0 5.900h4.500v4.400L0 9.600zM5.200 5.900H11V11l-5.800-.8z" fill="#fff" /></svg>
      </button>
      <button type="button" aria-label="Cortana" className="flex w-[31px] justify-center">
        <svg viewBox="0 0 11 11" className="size-[11px]"><circle cx="5.500" cy="5.500" r="4.300" fill="none" stroke="#fff" strokeWidth="1.600" /></svg>
      </button>
      <button type="button" aria-label="任务视图" className="flex w-[33px] justify-center">
        <svg viewBox="0 0 12 10" className="h-[10px] w-3"><path d="M0.500 0v2h6V0M0.500 10V8h6v2M0.500 3.500h6v3h-6zM9.500 0v2.500M9.500 4v2M9.500 7.500V10" fill="none" stroke="#dfe3e8" /></svg>
      </button>
      <button type="button" aria-label="Word" className="flex h-full w-[31px] items-center justify-center border-b-2 border-[#76b9ed] bg-[#353a41]">
        <WordLogo className="size-[15px]" />
      </button>
      <div className="ml-auto flex items-center">
        <div className="flex items-center gap-[5px]">
          <svg viewBox="0 0 8 5" className="h-[5px] w-2" aria-hidden="true"><path d="m0.500 4.500 3.500-4 3.500 4" fill="none" stroke="#e6e6e6" /></svg>
          <svg viewBox="0 0 11 11" className="size-[11px]" aria-hidden="true">
            <circle cx="5.500" cy="5.500" r="5.300" fill="#f6d52a" />
            <path d="M1 7a5 5 0 0 1 6-6.300L5.500 3.500q-3 .5-4.500 3.500zM10 4a5 5 0 0 1-6 6.300l1.500-2.800q3-.5 4.500-3.500z" fill="#35ad3c" />
            <path d="M5.500 3.500v4M3.500 5.500h4" stroke="#fff" strokeWidth="1.500" />
          </svg>
          <svg viewBox="0 0 11 9" className="h-[9px] w-[11px]" aria-hidden="true"><path d="M3 1.500h7.500v5H2M0.500 0v4h2V0M4.500 8.500h4M6.500 6.500v2" fill="none" stroke="#e6e6e6" strokeWidth="0.900" /></svg>
          <svg viewBox="0 0 11 9" className="h-[9px] w-[11px]" aria-hidden="true"><path d="M0.500 3.500H2L4.500 1v7L2 5.500H0.500zM6 3q1 1.500 0 3M7.500 2q2 2.500 0 5M9 1q2.500 3.500 0 7" fill="none" stroke="#cfd2d6" strokeWidth="0.800" /></svg>
          <span>中</span>
        </div>
        <svg viewBox="0 0 10 10" className="ml-[9px] size-[10px]" aria-hidden="true">
          <path d="M1 1.500 9.500 0 9 9 0.500 10z" fill="#f0512c" />
          <path d="M7.500 2.700Q3 1.700 3 3.600T7 5.500 2.500 7.500" fill="none" stroke="#fff" strokeWidth="1.300" />
        </svg>
        <div className="ml-[13px] flex w-[62px] flex-col items-center whitespace-nowrap leading-[12px]">
          <span>11:24</span>
          <span>2020/2/1 星期六</span>
        </div>
        <button type="button" aria-label="通知" className="ml-[11px] mr-[10px]">
          <svg viewBox="0 0 17 16" className="h-4 w-[17px]">
            <path d="M1 1.500h10.500v8H6L3.500 12V9.500H1z" fill="#fff" />
            <path d="M3 4h6.500M3 6h6.500" stroke="#05080f" strokeWidth="0.800" />
            <circle cx="11.500" cy="10.500" r="5" fill="#3b3e42" stroke="#6e7175" strokeWidth="0.600" />
            <text x="11.500" y="13.500" textAnchor="middle" fontSize="8" fill="#fff">1</text>
          </svg>
        </button>
      </div>
    </div>
  );
}

function Watermark() {
  return (
    <div className="pointer-events-none absolute bottom-[17px] right-[47px] z-10 w-[154px] text-white/75 [text-shadow:0_0_2px_rgb(70_90_120/0.6)]">
      <div className="flex items-end">
        <span className="font-['Liberation_Sans'] text-[36px] font-bold leading-[33px]">Bai</span>
        <svg viewBox="0 0 46 50" className="-ml-1 h-[50px] w-[46px] shrink-0 overflow-visible font-['Liberation_Sans']" aria-hidden="true">
          <g fill="#fff" fillOpacity="0.750" stroke="#6f89ac" strokeOpacity="0.500" strokeWidth="0.700">
            <ellipse cx="6" cy="20" rx="5.500" ry="7.500" />
            <ellipse cx="17" cy="9" rx="5.500" ry="7.500" />
            <ellipse cx="31" cy="10" rx="5.500" ry="7.500" transform="rotate(12 31 10)" />
            <ellipse cx="40" cy="23.500" rx="5.500" ry="7.500" />
            <path d="M23 21c5 0 7 6 10 9s9 6 8 12-6 8-10 7-6-1-8-1-5 0-9 1-10-1-10-7 4-8 8-12 6-9 11-9z" />
          </g>
          <text x="23" y="44" textAnchor="middle" fontSize="20" fontWeight="bold" fill="#8da6c6">du</text>
        </svg>
        <span className="whitespace-nowrap text-[26px] font-bold leading-[32px]">经验</span>
      </div>
      <div className="whitespace-nowrap pt-1 text-[18px] leading-[22px] text-white/85">jingyan.baidu.com</div>
    </div>
  );
}

export default function App() {
  return (
    <div className="relative flex h-screen flex-col overflow-hidden font-['Open_Sans','Noto_Sans_CJK_SC',sans-serif] text-[8px] leading-[12px]">
      <Header />
      <Ribbon />
      <QuickAccess />
      <main className="flex min-h-0 flex-1 border-t border-[#b5cae6] bg-linear-to-b from-[#c9dcf4] to-[#839fc1]">
        <VerticalRuler />
        <div className="flex min-w-0 flex-1 flex-col items-center">
          <div className="flex h-[25px] shrink-0 pl-[2px] pt-[2px]">
            <HorizontalRuler />
          </div>
          <Page />
        </div>
        <Scrollbar />
      </main>
      <StatusBar />
      <Taskbar />
      <Watermark />
    </div>
  );
}
